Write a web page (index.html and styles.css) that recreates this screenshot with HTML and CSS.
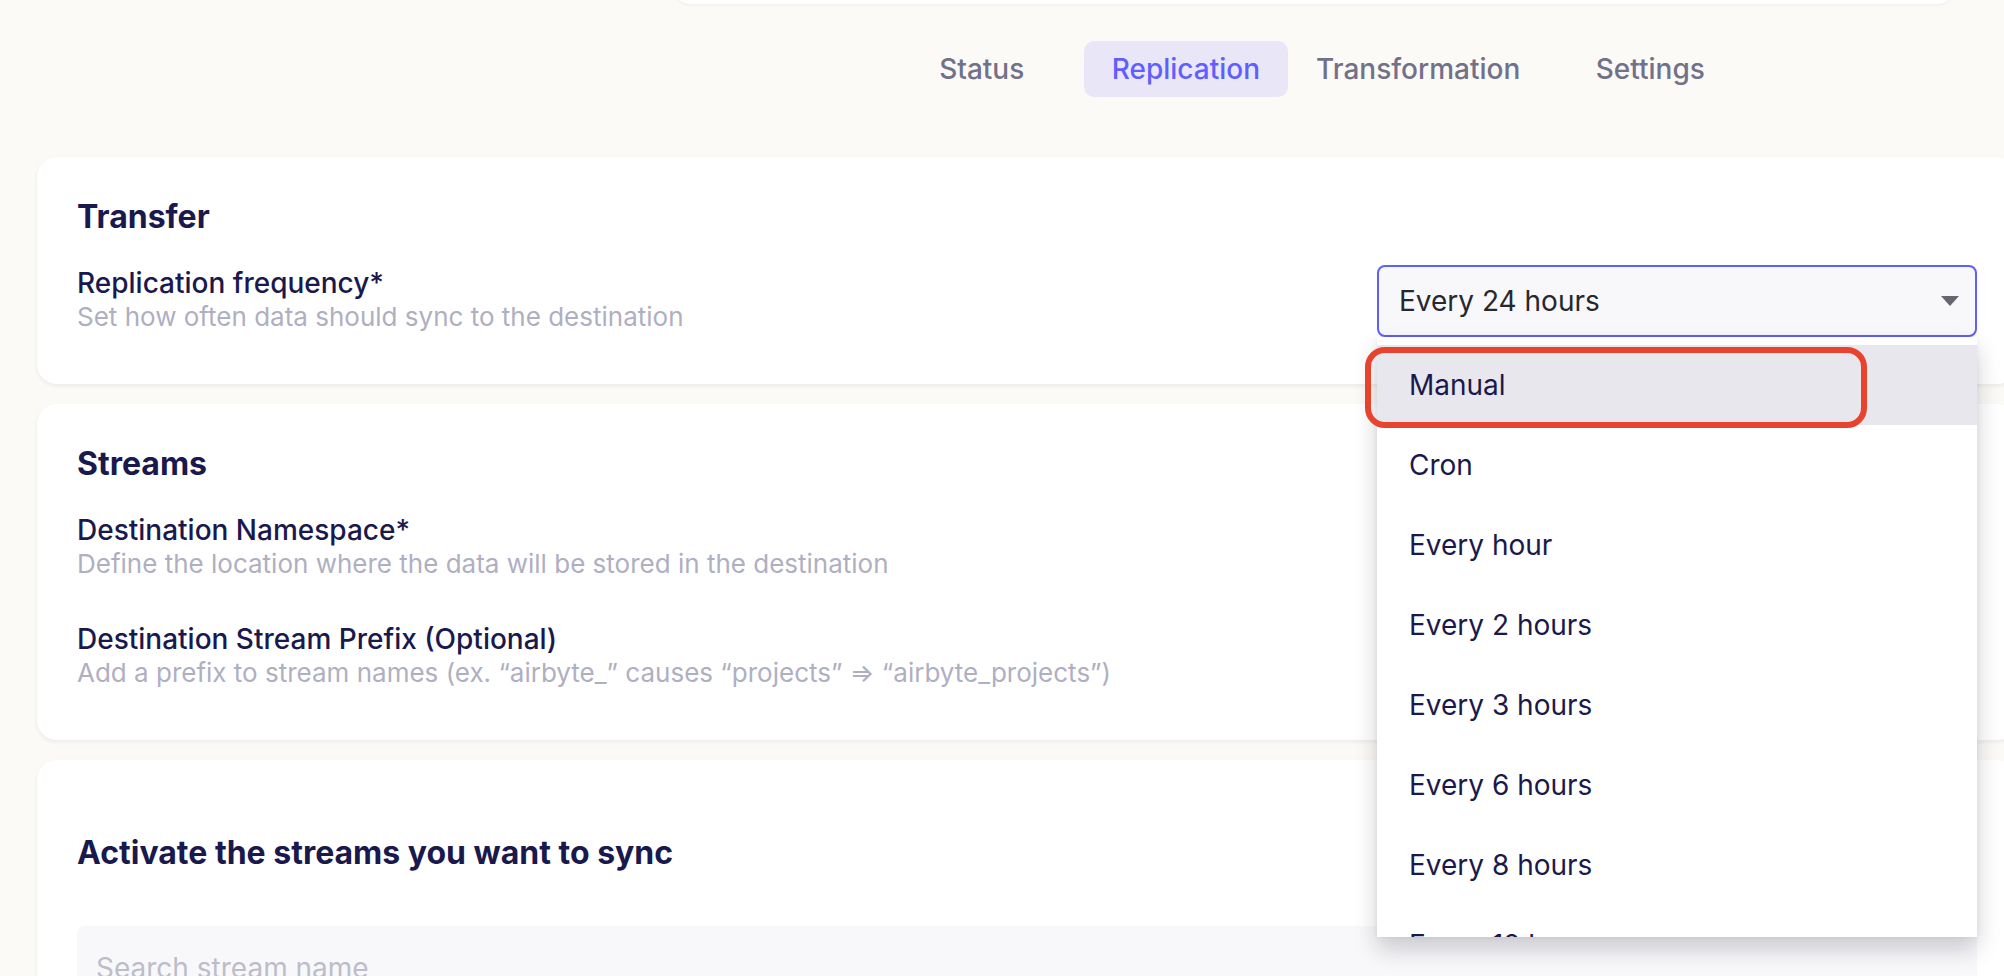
FILE: index.html
```html
<!DOCTYPE html>
<html lang="en">
<head>
    <meta charset="UTF-8">
    <title>Connection - Replication</title>
    <link rel="stylesheet" href="styles.css">
</head>
<body>
    <div class="page">
        <div class="top-card"></div>

        <nav class="tabs">
            <a class="tab">Status</a>
            <a class="tab active">Replication</a>
            <a class="tab">Transformation</a>
            <a class="tab">Settings</a>
        </nav>

        <section class="card">
            <h2 class="card-title">Transfer</h2>
            <div class="field-row">
                <div class="field-text">
                    <div class="field-label">Replication frequency*</div>
                    <div class="field-hint">Set how often data should sync to the destination</div>
                </div>
                <div class="select-wrap">
                    <div class="select">
                        <span>Every 24 hours</span>
                        <span class="caret"></span>
                    </div>
                    <ul class="menu">
                        <li class="menu-item hover">Manual</li>
                        <li class="menu-item">Cron</li>
                        <li class="menu-item">Every hour</li>
                        <li class="menu-item">Every 2 hours</li>
                        <li class="menu-item">Every 3 hours</li>
                        <li class="menu-item">Every 6 hours</li>
                        <li class="menu-item">Every 8 hours</li>
                        <li class="menu-item">Every 12 hours</li>
                        <li class="menu-item">Every 24 hours</li>
                    </ul>
                    <div class="annotation"></div>
                </div>
            </div>
        </section>

        <section class="card">
            <h2 class="card-title">Streams</h2>
            <div class="field-row">
                <div class="field-text">
                    <div class="field-label">Destination Namespace*</div>
                    <div class="field-hint">Define the location where the data will be stored in the destination</div>
                </div>
            </div>
            <div class="field-row">
                <div class="field-text">
                    <div class="field-label">Destination Stream Prefix (Optional)</div>
                    <div class="field-hint">Add a prefix to stream names (ex. “airbyte_” causes “projects” ⇒ “airbyte_projects”)</div>
                </div>
            </div>
        </section>

        <section class="card streams-card">
            <h2 class="card-title">Activate the streams you want to sync</h2>
            <div class="search">Search stream name</div>
        </section>
    </div>
</body>
</html>
```

FILE: styles.css
```css
body {
    margin: 0;
    background-color: #fcfaf7;
    font-family: 'Inter', 'Noto Sans', sans-serif;
    color: #1a194d;
    overflow: hidden;
}

.page {
    width: 1980px;
    padding-left: 37px;
}

.top-card {
    width: 1286px;
    height: 44px;
    margin-top: -40px;
    margin-left: 634px;
    background-color: #fff;
    border-radius: 20px;
    box-shadow: 0 1px 3px rgba(26, 25, 77, 0.06);
}

/* tabs */
.tabs {
    width: 1286px;
    margin: 37px 0 0 636px;
    display: flex;
    justify-content: center;
}

.tab {
    min-width: 204px;
    height: 56px;
    padding: 0 28px;
    box-sizing: border-box;
    display: flex;
    align-items: center;
    justify-content: center;
    border-radius: 10px;
    font-size: 28px;
    font-weight: 500;
    color: #717189;
}

.tab.active {
    background-color: #e9e6f7;
    color: #615eff;
}

/* cards */
.card {
    background-color: #fff;
    border-radius: 20px;
    padding: 40px 40px 47px;
    margin-top: 20px;
    box-shadow: 0 2px 4px rgba(26, 25, 77, 0.07);
}

.tabs + .card {
    margin-top: 60px;
}

.card-title {
    margin: 0 0 29px;
    font-size: 32px;
    line-height: 39px;
    font-weight: 700;
}

.field-row {
    display: flex;
    justify-content: space-between;
    min-height: 72px;
}

.field-row + .field-row {
    margin-top: 37px;
}

.field-label {
    font-size: 28px;
    line-height: 36px;
    font-weight: 500;
}

.field-hint {
    font-size: 26px;
    line-height: 31px;
    color: #afafc2;
}

/* dropdown */
.select-wrap {
    position: relative;
    z-index: 10;
    width: 600px;
}

.select {
    height: 72px;
    box-sizing: border-box;
    padding: 0 16px 0 20px;
    display: flex;
    align-items: center;
    justify-content: space-between;
    border: 2px solid #615eff;
    border-radius: 8px;
    background-color: #f8f8fa;
    font-size: 28px;
    color: #27272e;
}

.caret {
    width: 0;
    height: 0;
    border-left: 9px solid transparent;
    border-right: 9px solid transparent;
    border-top: 10px solid #66666e;
}

.menu {
    position: absolute;
    top: 100%;
    left: 0;
    right: 0;
    height: 600px;
    box-sizing: border-box;
    margin: 0;
    padding: 8px 0 0;
    list-style: none;
    overflow: hidden;
    background-color: #fff;
    box-shadow: 0 12px 22px rgba(20, 20, 40, 0.2), 0 0 6px rgba(20, 20, 40, 0.06);
}

.menu-item {
    height: 80px;
    padding-left: 32px;
    display: flex;
    align-items: center;
    font-size: 28px;
    color: #1a194d;
}

.menu-item.hover {
    background-color: #e8e7ed;
}

.annotation {
    position: absolute;
    left: -12px;
    top: 82px;
    width: 502px;
    height: 81px;
    box-sizing: border-box;
    border: 6px solid #e8432d;
    border-radius: 20px;
}

/* streams table */
.streams-card {
    padding-top: 73px;
    height: 400px;
}

.streams-card .card-title {
    margin-bottom: 54px;
}

.search {
    height: 84px;
    box-sizing: border-box;
    padding-left: 19px;
    display: flex;
    align-items: center;
    border-radius: 8px;
    background-color: #f8f8fa;
    font-size: 28px;
    color: #bdbdca;
}
```
